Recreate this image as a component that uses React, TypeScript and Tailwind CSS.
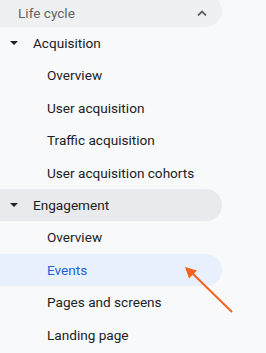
import React from 'react';

const sub = (label: string, active = false) => (
  <div
    key={label}
    className={`h-[32.4px] w-[222px] flex items-center pl-[47px] rounded-r-full text-[13.6px] ${
      active ? 'bg-[#e8f0fe] text-[#1a62d6]' : 'text-[#202124]'
    }`}
  >
    {label}
  </div>
);

const Caret = () => (
  <svg width="8" height="4" viewBox="0 0 8 4" className="ml-[10px] mr-[15px]">
    <path d="M0 0h8L4 4z" fill="#202124" />
  </svg>
);

export default function App() {
  return (
    <div
      className="relative w-[266px] h-[353px] overflow-hidden bg-[#f8f9fa]"
      style={{ fontFamily: 'Roboto, "Open Sans", sans-serif' }}
    >
      <div className="-mt-[5px] h-[32px] w-[222px] flex items-center justify-between pl-[18px] pr-[15px] rounded-r-full bg-[#eef0f2] pt-[4px]">
        <span className="text-[13.6px] text-[#5f6368]">Life cycle</span>
        <svg width="10" height="6" viewBox="0 0 10 6">
          <path d="M1 5.5L5 1.5l4 4" fill="none" stroke="#5f6368" strokeWidth="1.8" />
        </svg>
      </div>

      <div className="h-[32.4px] w-[222px] flex items-center text-[13.6px] text-[#202124]">
        <Caret />
        Acquisition
      </div>
      {sub('Overview')}
      {sub('User acquisition')}
      {sub('Traffic acquisition')}
      {sub('User acquisition cohorts')}

      <div className="h-[32.4px] w-[222px] flex items-center rounded-r-full bg-[#e8eaed] text-[13.6px] text-[#202124]">
        <Caret />
        Engagement
      </div>
      {sub('Overview')}
      {sub('Events', true)}
      {sub('Pages and screens')}
      {sub('Landing page')}

      <svg className="absolute left-0 top-0" width="266" height="353" viewBox="0 0 266 353">
        <line x1="232" y1="312" x2="191" y2="272" stroke="#f4631e" strokeWidth="2" />
        <path d="M185 267L197 270.5L189 278.5z" fill="#f4631e" />
      </svg>
    </div>
  );
}
